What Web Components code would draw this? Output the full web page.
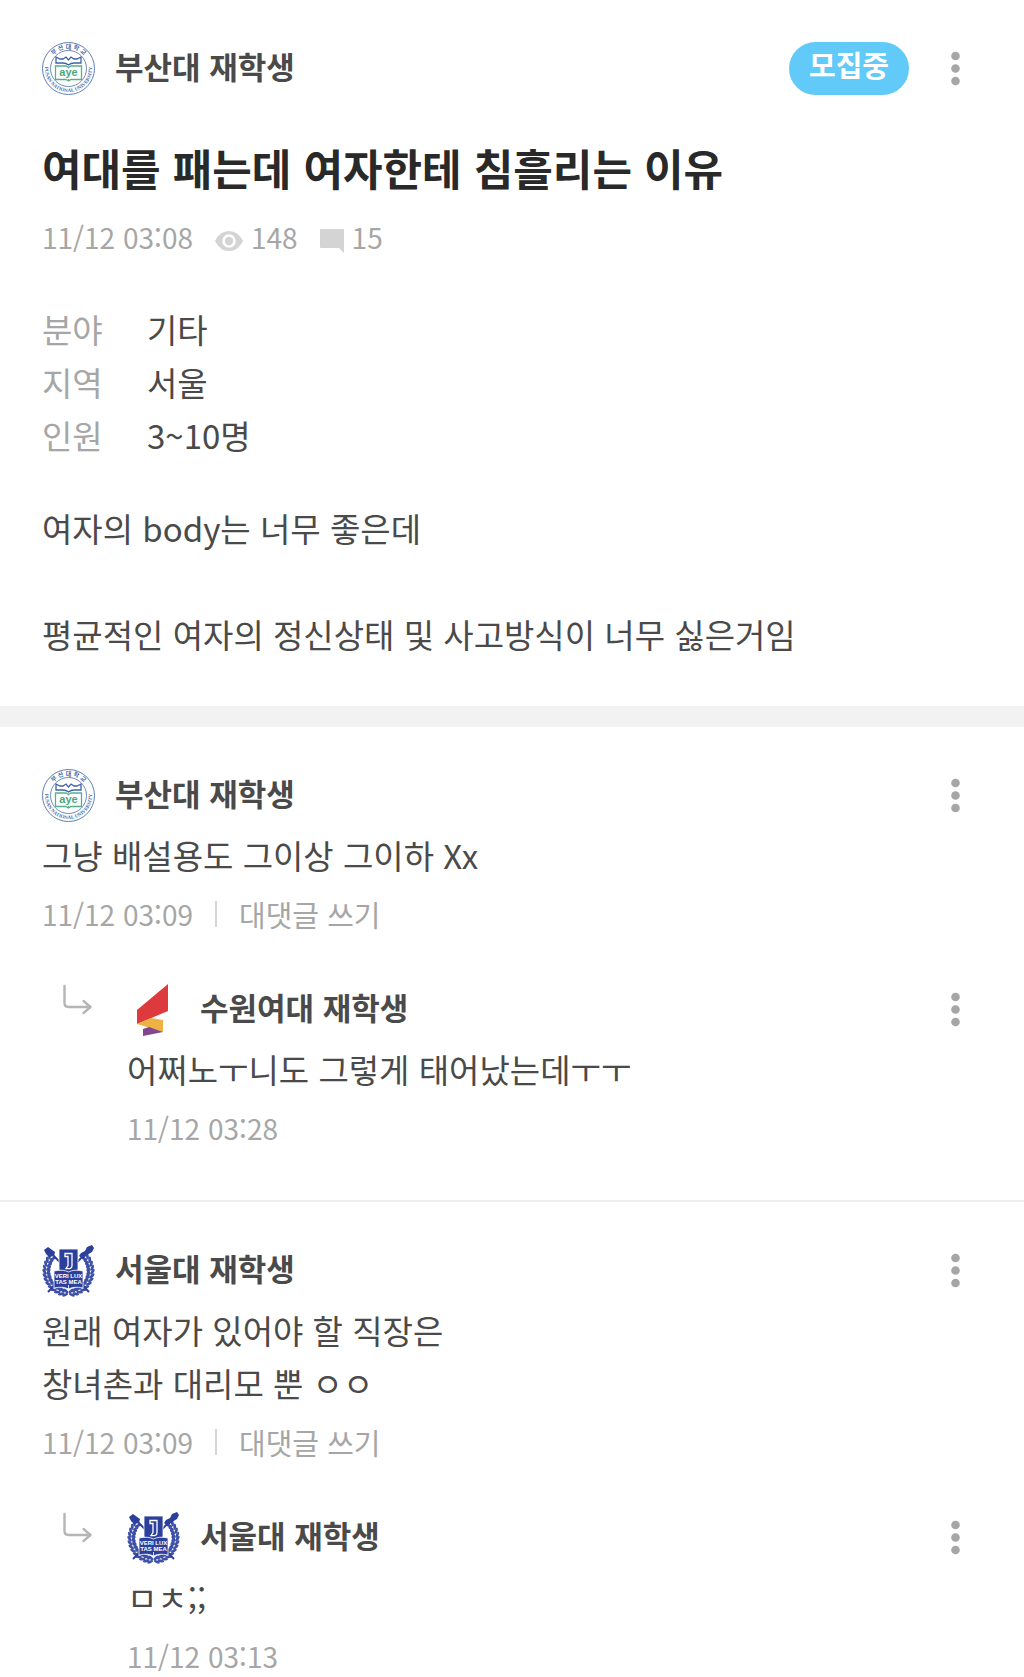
<!DOCTYPE html>
<html lang="ko">
<head>
<meta charset="utf-8">
<meta name="viewport" content="width=device-width, initial-scale=1">
<title>여대를 패는데 여자한테 침흘리는 이유</title>
<style>
  body {
    margin: 0;
    background: #fff;
    color: #4a4a4a;
    font-family: "Noto Sans CJK KR", "Noto Sans", sans-serif;
    font-size: 33px;
    line-height: 53px;
    --muted: #a6a6a6;
    --gutter: 42px;
  }
  p {
    margin: 0;
  }
</style>
</head>
<body>
<board-post school="pusan" state="모집중" date="11/12 03:08" views="148" comments="15">
  <span slot="author">부산대 재학생</span>
  <span slot="title">여대를 패는데 여자한테 침흘리는 이유</span>
  <info-row slot="info" label="분야">기타</info-row>
  <info-row slot="info" label="지역">서울</info-row>
  <info-row slot="info" label="인원">3~10명</info-row>
  <p>여자의 body는 너무 좋은데</p>
  <p><br></p>
  <p>평균적인 여자의 정신상태 및 사고방식이 너무 싫은거임</p>
</board-post>

<comment-thread>
  <board-comment school="pusan" date="11/12 03:09" can-reply>
    <span slot="author">부산대 재학생</span>
    <p>그냥 배설용도 그이상 그이하 Xx</p>
  </board-comment>
  <comment-reply>
    <board-comment school="suwon" date="11/12 03:28">
      <span slot="author">수원여대 재학생</span>
      <p>어쩌노ㅜ니도 그렇게 태어났는데ㅜㅜ</p>
    </board-comment>
  </comment-reply>
</comment-thread>

<comment-thread>
  <board-comment school="seoul" date="11/12 03:09" can-reply>
    <span slot="author">서울대 재학생</span>
    <p>원래 여자가 있어야 할 직장은</p>
    <p>창녀촌과 대리모 뿐 ㅇㅇ</p>
  </board-comment>
  <comment-reply>
    <board-comment school="seoul" date="11/12 03:13">
      <span slot="author">서울대 재학생</span>
      <p>ㅁㅊ;;</p>
    </board-comment>
  </comment-reply>
</comment-thread>

<script>
const { customElements, HTMLElement } = window

const SCHOOL = 'school'

const leaf = (x, y, r) => `<ellipse cx="${x}" cy="${y}" rx="3.2" ry="1.4" transform="rotate(${r} ${x} ${y})"/>`

// laurel branch down both sides of the Seoul crest
const laurel = () => {
  let out = ''
  for (let a = 98; a <= 218; a += 10) {
    const t = a * Math.PI / 180
    for (const side of [1, -1]) {
      for (const [r, turn] of [[24, 60], [20, 120]]) {
        const x = 26.5 + side * r * Math.cos(t)
        const y = 27 + r * Math.sin(t)
        out += leaf(x.toFixed(1), y.toFixed(1), side * (a + turn))
      }
    }
  }
  return out
}

const CRESTS = {
  pusan: `
    <svg viewBox="0 0 53 53" aria-hidden="true">
      <defs>
        <path id="top" d="M6.500 26.500a20 20 0 0 1 40 0"/>
        <path id="bottom" d="M4.600 18a23.500 23.500 0 1 0 43.800 0"/>
      </defs>
      <g fill="none" stroke="#5f80b4">
        <circle cx="26.500" cy="26.500" r="26" stroke-width="1"/>
        <circle cx="26.500" cy="26.500" r="18" stroke-width=".9"/>
      </g>
      <g fill="#486ca8">
        <text font-size="6" font-weight="700" text-anchor="middle" font-family="Noto Sans CJK KR"><textPath href="#top" startOffset="50%">부 산 대 학 교</textPath></text>
        <text font-size="5" font-weight="700" text-anchor="middle" font-family="Liberation Serif"><textPath href="#bottom" startOffset="50%">PUSAN NATIONAL UNIVERSITY</textPath></text>
      </g>
      <path d="M14 21v-6l4 2h3l3-2 2.500 3 2.500-3 3 2h3l4-2v6h-7q-3 0-5.500 2-2.500-2-5.500-2z" fill="#fff" stroke="#3f64a5" stroke-width="1.300"/>
      <path d="M13.500 24h10.500l2.500 1.500 2.500-1.500h10.500v13.500h-10.500l-2.500 1.500-2.500-1.500h-10.500zM26.500 24.500v2M26.500 37v2" fill="#fff" stroke="#5aaf8a" stroke-width="1.300"/>
      <text x="26.500" y="34" font-size="11" font-weight="700" text-anchor="middle" font-family="Liberation Sans" fill="#4ba67c">aye</text>
    </svg>`,
  suwon: `
    <svg viewBox="0 0 53 53" aria-hidden="true">
      <path d="M10 27 41 1v27L10 41z" fill="#dc3a3c"/>
      <path d="M10 41 24 35l12 2v12L20 44z" fill="#edb243"/>
      <path d="M16 46l6-2 14 5-20 4z" fill="#82458f"/>
    </svg>`,
  seoul: `
    <svg viewBox="0 0 53 53" aria-hidden="true">
      <g fill="#3d50a6">${laurel()}</g>
      <g stroke="#2c3f9b" fill="none">
        <path d="M6 48 46 7M47 48 7 7" stroke-width="2"/>
      </g>
      <g fill="#2c3f9b">
        <path d="M2 6l4-3 7 5-1 4-5 1-3-3z"/>
        <path d="M39 9l4-2 2-4 5-2 2 3-2 4-5 3-4 4-4-3z"/>
        <path d="M17 5h19v21l-9.500 4-9.500-4z" stroke="#fff" stroke-width=".800"/>
        <path d="M12 27q9-2 14.500 1Q32 25 41 27v17q-9-2-14.500 1Q21 42 12 44z" stroke="#fff" stroke-width=".800"/>
      </g>
      <path d="M23 9.500h7v12q0 4-6 3l2-3v-9h-3z" fill="none" stroke="#fff" stroke-width="1.300"/>
      <path d="M26.500 41v4" stroke="#fff" stroke-width=".800"/>
      <g fill="#fff" font-size="6" font-weight="700" font-family="Liberation Sans" text-anchor="middle">
        <text x="26.500" y="34">VERI LUX</text>
        <text x="26.500" y="40">TAS MEA</text>
      </g>
    </svg>`
}

const define = (name, html, fill = () => {}) => {
  const template = document.createElement('template')
  template.innerHTML = html

  customElements.define(name, class extends HTMLElement {
    constructor () {
      super()
      this.attachShadow({mode: 'open'})
      this.shadowRoot.appendChild(template.content.cloneNode(true))
    }

    static get observedAttributes () {
      return [
        SCHOOL
      ]
    }

    _fill () {
      fill(this, selector => this.shadowRoot.querySelector(selector))
    }

    attributeChangedCallback () {
      this._fill()
    }

    connectedCallback () {
      this._fill()
    }
  })
}

define('school-crest', `
  <style>
    :host {
      display: block;
      flex: none;
      width: 53px;
      height: 53px;
    }
    svg {
      display: block;
      width: 53px;
      height: 53px;
      overflow: visible;
    }
  </style>
  <div></div>
`, (host, $) => { $('div').innerHTML = CRESTS[host.getAttribute(SCHOOL)] || '' })

define('more-button', `
  <style>
    :host {
      display: block;
      flex: none;
    }
    button {
      display: block;
      width: 53px;
      height: 53px;
      padding: 0;
      border: 0;
      background: none;
      cursor: pointer;
    }
    svg {
      display: block;
      fill: var(--muted);
    }
  </style>
  <button type="button" aria-label="더보기">
    <svg width="53" height="53" viewBox="0 0 53 53">
      <circle cx="26.500" cy="14" r="4.300"/>
      <circle cx="26.500" cy="26.500" r="4.300"/>
      <circle cx="26.500" cy="39" r="4.300"/>
    </svg>
  </button>
`)

define('author-bar', `
  <style>
    :host {
      display: flex;
      align-items: center;
      gap: 20px;
      height: 53px;
    }
    .name {
      flex: 1;
      padding-bottom: 6px;
      font-size: 31px;
      font-weight: 700;
      line-height: 47px;
    }
  </style>
  <school-crest></school-crest>
  <div class="name"><slot></slot></div>
  <slot name="state"></slot>
  <more-button></more-button>
`, (host, $) => { $('school-crest').setAttribute(SCHOOL, host.getAttribute(SCHOOL)) })

define('info-row', `
  <style>
    :host {
      display: block;
    }
    dl {
      display: grid;
      grid-template-columns: 105px 1fr;
      margin: 0;
    }
    dt {
      color: var(--muted);
    }
    dd {
      margin: 0;
    }
  </style>
  <dl><dt></dt><dd><slot></slot></dd></dl>
`, (host, $) => { $('dt').textContent = host.getAttribute('label') })

define('board-post', `
  <style>
    :host {
      display: block;
      padding: 42px var(--gutter) 45px;
      border-bottom: 21px solid #f2f2f2;
    }
    .state {
      padding: 0 20px 8px;
      border-radius: 27px;
      background: #62caf8;
      color: #fff;
      font-size: 29px;
      font-weight: 700;
      line-height: 45px;
    }
    h1 {
      margin: 40px 0 18px;
      color: #292929;
      font-size: 43px;
      font-weight: 700;
      line-height: 64px;
    }
    .meta {
      display: flex;
      align-items: center;
      color: var(--muted);
      font-size: 28px;
      line-height: 40px;
    }
    .count {
      display: flex;
      align-items: center;
      gap: 8px;
      margin-left: 22px;
    }
    svg {
      margin-top: 8px;
    }
    .info {
      margin: 46px 0 40px;
    }
  </style>
  <article>
    <author-bar>
      <slot name="author"></slot>
      <span class="state" slot="state"></span>
    </author-bar>
    <h1><slot name="title"></slot></h1>
    <div class="meta">
      <time></time>
      <span class="count">
        <svg width="28" height="20" viewBox="0 0 28 20" aria-hidden="true">
          <path d="M0 10Q5 0 14 0t14 10Q23 20 14 20T0 10z" fill="#d4d4d4"/>
          <circle cx="14" cy="10" r="5.500" fill="#d4d4d4" stroke="#fff" stroke-width="2.600"/>
        </svg>
        <span class="views"></span>
      </span>
      <span class="count">
        <svg width="24" height="24" viewBox="0 0 24 24" aria-hidden="true">
          <path d="M1 0h22q1 0 1 1v23l-5-5H1q-1 0-1-1V1q0-1 1-1z" fill="#d4d4d4"/>
        </svg>
        <span class="comments"></span>
      </span>
    </div>
    <div class="info"><slot name="info"></slot></div>
    <slot></slot>
  </article>
`, (host, $) => {
  $('author-bar').setAttribute(SCHOOL, host.getAttribute(SCHOOL))
  $('.state').textContent = host.getAttribute('state')
  $('time').textContent = host.getAttribute('date')
  $('.views').textContent = host.getAttribute('views')
  $('.comments').textContent = host.getAttribute('comments')
})

define('board-comment', `
  <style>
    :host {
      display: block;
    }
    .text {
      margin: 7px 0 12px;
    }
    .meta {
      display: flex;
      align-items: center;
      color: var(--muted);
      font-size: 28px;
      line-height: 40px;
    }
    button {
      display: flex;
      align-items: center;
      gap: 22px;
      margin-left: 22px;
      padding: 0;
      border: 0;
      background: none;
      color: inherit;
      font: inherit;
      font-size: 29px;
      cursor: pointer;
    }
    button::before {
      content: "";
      width: 2px;
      height: 26px;
      background: #d4d4d4;
    }
    button[hidden] {
      display: none;
    }
  </style>
  <article>
    <author-bar><slot name="author"></slot></author-bar>
    <div class="text"><slot></slot></div>
    <div class="meta">
      <time></time>
      <button type="button" hidden>대댓글 쓰기</button>
    </div>
  </article>
`, (host, $) => {
  $('author-bar').setAttribute(SCHOOL, host.getAttribute(SCHOOL))
  $('time').textContent = host.getAttribute('date')
  $('button').hidden = !host.hasAttribute('can-reply')
})

define('comment-reply', `
  <style>
    :host {
      display: grid;
      grid-template-columns: 64px 1fr;
      margin-top: 49px;
      padding-left: 21px;
    }
  </style>
  <svg width="30" height="32" viewBox="0 0 30 32" fill="none" stroke="#b5b5b5" stroke-width="2.400" stroke-linecap="round" stroke-linejoin="round" aria-hidden="true">
    <path d="M1.500 3v17q0 4 4 4h22M20.500 18l7 6-7 6"/>
  </svg>
  <slot></slot>
`)

define('comment-thread', `
  <style>
    :host {
      display: block;
      padding: 42px var(--gutter) 52px;
      border-bottom: 2px solid #f0f0f0;
    }
    :host(:last-of-type) {
      padding-bottom: 0;
      border-bottom: 0;
    }
  </style>
  <slot></slot>
`)
</script>
</body>
</html>
